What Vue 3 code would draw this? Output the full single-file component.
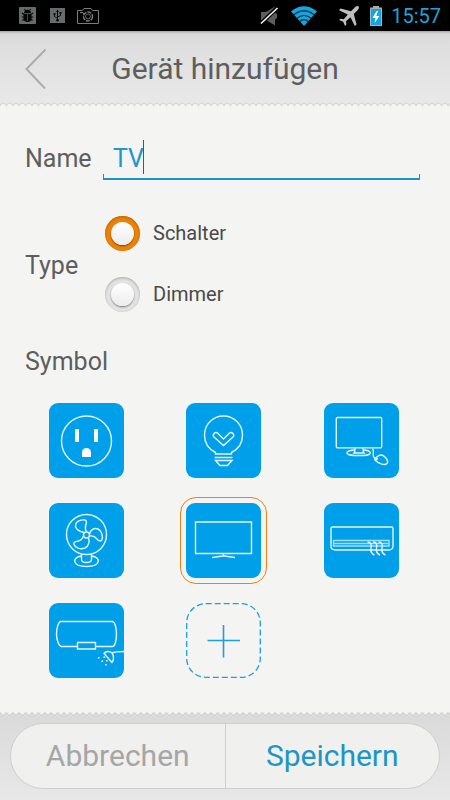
<template>
  <div class="screen">
    <div class="status">
      <svg class="s-bug" viewBox="0 0 17 17" width="17" height="17">
        <rect width="17" height="17" rx="1" fill="#666c6c" />
        <path d="M4.500 7h8v4a4 4 0 0 1-8 0zM5 6.200a3.500 3.500 0 0 1 7 0z" fill="#050505" />
        <path d="M6.500 3.500 5.500 2M10.500 3.500l1-1.500M5 7.500 3 6M12 7.500l2-1.500M5 10H2.800M12 10h2.200M5.500 12 3.500 13.500M11.500 12l2 1.500" stroke="#050505" stroke-width="1.100" />
        <path d="M8.500 7v7" stroke="#555b5b" stroke-width=".7" />
      </svg>
      <svg class="s-usb" viewBox="0 0 15 15" width="15" height="15">
        <rect width="15" height="15" fill="#666c6c" />
        <path d="M7.500 12V3M7.500 10.500 4.500 8.500V6M7.500 9l3-1.500V5" fill="none" stroke="#0a0a0a" />
        <path d="M7.500 1.500 9 4H6zM3.500 5h2v2h-2zM9.500 4h2v2h-2z" fill="#0a0a0a" />
        <circle cx="7.500" cy="12.300" r="1.300" fill="#0a0a0a" />
      </svg>
      <svg class="s-cam" viewBox="0 0 22 16" width="22" height="16" fill="none" stroke="#777c7c">
        <path d="M.5 2.500h5l1.500-2h7l1.500 2h6v13H.5z" />
        <circle cx="11" cy="8.500" r="4.500" stroke-width="1.400" stroke-dasharray="4 1" />
        <circle cx="11" cy="8.500" r="2.500" stroke-width=".8" />
        <path d="M3 4.500h3l1 2" />
      </svg>
      <div class="spacer"></div>
      <svg class="s-mute" viewBox="0 0 19 20" width="19" height="20">
        <path d="M1 6h5l9-5.500v19L6 14H1z" fill="#5d5d5d" />
        <path d="M15 6.500c3 1 3 6 0 7z" fill="#5d5d5d" />
        <path d="M0 18.500 17.500 1.500" stroke="#000" stroke-width="4" />
        <path d="M1 17.500 17.500 2" stroke="#f5f5f5" stroke-width="1.600" />
      </svg>
      <svg class="s-wifi" viewBox="0 0 26 20" width="26" height="20">
        <path d="M0 5.500C8-1.500 18-1.500 26 5.500L13 20z" fill="#16a4dc" />
        <path d="M2.500 9C9 3.500 17 3.500 23.500 9M5.500 12.500c5-4 10-4 15 0M8.500 15.500c3-2.500 6-2.500 9 0" fill="none" stroke="#052a3a" stroke-width="1.200" />
      </svg>
      <svg class="s-plane" viewBox="0 0 20 20" width="20" height="20">
        <path d="M19.500.5c-1.200-1-2.800 0-4 1.200L12 5.200 1.500 2.500 0 4.200l8.800 4.400-4 4.600-3.300-.5L0 14l4.200 1.800L6 20l1.400-1.400-.4-3.400 4.500-4 4.300 8.800 1.700-1.500L14.800 8l3.500-3.500c1.200-1.200 2.200-2.800 1.200-4z" fill="#bebebe" />
      </svg>
      <svg class="s-battery" viewBox="0 0 12 20" width="12" height="20">
        <path d="M3 0h6v1.500h3V20H0V1.500h3z" fill="#aaa" />
        <rect y="3" width="12" height="17" fill="#16a4dc" />
        <path d="M.5 3v16.500h11V3" fill="none" stroke="#8fbfd2" />
        <path d="M6.500 5 2.500 12h3L4.500 17l5-7H6.300L8 5z" fill="#fff" />
      </svg>
      <span class="clock">15:57</span>
    </div>

    <header class="header">
      <button class="back" type="button" aria-label="Zurück">
        <svg viewBox="0 0 22 40" width="22" height="40" fill="none" stroke="#acacac" stroke-width="2">
          <path d="M21.500 .500 2.500 20 21 39.500" />
        </svg>
      </button>
      <h1>Gerät hinzufügen</h1>
    </header>
    <svg class="edge" height="5">
      <defs>
        <pattern id="scallop" width="6.400" height="5" patternUnits="userSpaceOnUse">
          <rect width="6.400" height="5" fill="#e8e8e8" />
          <path d="M0 5V4C1 .2 5.400 .2 6.400 4V5z" fill="#f4f4f2" />
          <path d="M0 4.200C1 .2 5.400 .2 6.400 4.200" fill="none" stroke="#cacaca" stroke-width=".9" />
        </pattern>
      </defs>
      <rect width="100%" height="5" fill="url(#scallop)" />
    </svg>

    <main class="form">
      <div class="row name-row">
        <label class="label" for="name">Name</label>
        <div class="field">
          <input id="name" v-model="name" type="text" autocomplete="off" spellcheck="false" />
          <span class="caret"></span>
        </div>
      </div>

      <div class="row type-row" role="radiogroup" aria-labelledby="type-label">
        <span id="type-label" class="label">Type</span>
        <div class="options">
          <label v-for="t in types" :key="t" class="option">
            <input v-model="type" type="radio" name="type" :value="t" />
            <span>{{ t }}</span>
          </label>
        </div>
      </div>

      <h2 class="label">Symbol</h2>
      <div class="symbols">
        <button
          v-for="s in symbols"
          :key="s.id"
          type="button"
          class="tile"
          :class="{ selected: s.id === symbol }"
          :aria-label="s.label"
          :aria-pressed="s.id === symbol"
          @click="symbol = s.id"
        >
          <svg viewBox="0 0 75 75" width="75" height="75">
            <path v-for="(p, i) in s.soft" :key="'s' + i" :d="p" class="soft" />
            <path v-for="(p, i) in s.lines" :key="'l' + i" :d="p" class="line" />
            <path v-for="(p, i) in s.fills" :key="'f' + i" :d="p" class="fill" />
          </svg>
        </button>
        <button type="button" class="tile add" aria-label="Symbol hinzufügen">
          <svg viewBox="0 0 75 75" width="75" height="75" fill="none" stroke="#1a9fdf">
            <rect x=".7" y=".7" width="73.600" height="73.600" rx="19" stroke-width="1.300" stroke-dasharray="6 3" />
            <path d="M37.500 22v32.500M21.500 37.500h32.500" stroke-width="1.600" />
          </svg>
        </button>
      </div>
    </main>

    <svg class="edge" height="4">
      <defs>
        <pattern id="teeth" width="6.400" height="4" patternUnits="userSpaceOnUse">
          <rect width="6.400" height="4" fill="#dcdcdc" />
          <path d="M0 0V.5C1.500 .5 1.700 3 3.200 3S4.900 .5 6.400 .5V0z" fill="#f4f4f2" />
          <path d="M0 .8C1.500 .8 1.700 3.300 3.200 3.300S4.900 .8 6.400 .8" fill="none" stroke="#c6c6c6" stroke-width=".8" />
        </pattern>
      </defs>
      <rect width="100%" height="4" fill="url(#teeth)" />
    </svg>
    <footer class="footer">
      <div class="actions">
        <button type="button" class="cancel">Abbrechen</button>
        <button type="button" class="save">Speichern</button>
      </div>
    </footer>
  </div>
</template>

<script setup>
import { ref } from 'vue';

const name = ref('TV');
const type = ref('Schalter');
const symbol = ref('tv');

const types = ['Schalter', 'Dimmer'];

const symbols = [
  {
    id: 'socket',
    label: 'Steckdose',
    lines: ['M62.500 38a25 25 0 1 1-50 0a25 25 0 1 1 50 0z'],
    fills: ['M26 26h4v13h-4z', 'M45 26h4v13h-4z', 'M33 54v-4.500a4.500 4.500 0 0 1 9 0V54z'],
  },
  {
    id: 'bulb',
    label: 'Lampe',
    lines: [
      'M29.500 51v-1.500C22.500 46 18.500 40 18.500 32a19 19 0 0 1 38 0c0 8-4 14-11 17.500V51z',
      'M28.500 54.500h18M29.500 57.500h16.500L41.500 62.500h-7.500z',
      'M28 30.500c1.500-1.500 3-1 4 0l5.500 5.500 5.500-5.500c1-1 2.500-1.500 4 0 1 1.200 1 2.500 0 3.500l-9.500 8.500L28 34c-1-1-1-2.300 0-3.500z',
    ],
  },
  {
    id: 'computer',
    label: 'Computer',
    lines: [
      'M13.500 14.500h43a1.200 1.200 0 0 1 1.200 1.200v28a1.200 1.200 0 0 1-1.200 1.200h-43a1.200 1.200 0 0 1-1.200-1.200v-28a1.200 1.200 0 0 1 1.200-1.200z',
      'M31 45c0 4-1 5-1 5h10s-1-1-1-5',
      'M31 47c-10 .5-11 5-1 5.500h10c9-.5 8-5-1-5.500',
      'M48.500 45.500c2 2 0 6 1 8s2 2 2.500 3.500',
      'M51 57c0-3 5-6 8-4.500s6 6 4 8-8 1-12-3.500zM51 57l3-1.500',
    ],
  },
  {
    id: 'fan',
    label: 'Ventilator',
    lines: [
      'M57.500 31.500a20 20 0 1 1-40 0a20 20 0 1 1 40 0z',
      'M40.500 32a3 3 0 1 1-6 0a3 3 0 1 1 6 0z',
      'M35 29.500c-4-1-8.500-3-8.500-6.500 0-5 6-6.500 9.500-6 2 .5 1.500 3 .8 5-.8 3-.6 5 .7 7',
      'M40.500 31c1-4 4.500-6.500 8.500-5 4 2 5 7.500 4 10.500-1 2.500-3.500 1.500-5-.5-2-2.500-4.500-3.500-7.500-3',
      'M39.500 34.500c1.500 4 0 9-3.500 10.500-5 2-10-.5-11-3.500-1-2.500 1.500-3 3.500-3.300 3-.5 5-2.200 6-5.200',
      'M32.500 51v5.500c0 4 10 4 10 0V51',
      'M32.500 53c-9.500 1-10 10.500 5 10.500s14.500-9.500 5-10.500',
    ],
  },
  {
    id: 'tv',
    label: 'Fernseher',
    lines: ['M9.500 19h56v31.500h-56z', 'M37.500 50.500v2.500M26 54.500l11-1.500h1.500l10.500 1.500'],
  },
  {
    id: 'aircon',
    label: 'Klimaanlage',
    lines: [
      'M8.500 24h59a1.500 1.500 0 0 1 1.500 1.500v18c0 2-2 3.500-4 3.500H11.500c-3 0-4.500-1.500-4.500-3.500v-18A1.500 1.500 0 0 1 8.500 24z',
      'M43.500 39c4 0 4 3 3.500 6s1 6 3.500 7M49 39c4 0 4 3 3.500 6s1 6 3.500 7M54.500 39c4 0 4 3 3.500 6s1 6 3.500 7',
    ],
    soft: ['M9.500 37.500h55.500v5.500h-55.500z', 'M10 40.500h54.500'],
  },
  {
    id: 'boiler',
    label: 'Boiler',
    lines: [
      'M28.500 43.500H12.500C10 43.500 7.500 37 7.500 31s2-12 4-12.500h52c2.500.5 4 6.500 4 12.500s-1.500 12.500-4 12.500H46.500',
      'M28.500 39.500h18v6.500h-18z',
      'M75 48.500c-5 0-9 0-12 1.500-2-2-6-2-8 .5l8 9c2-2 2-7 0-9.500',
    ],
    fills: [
      'M49 54h1.600v1.600H49zM52.500 57.500h1.600v1.600h-1.600zM56 61h1.600v1.600H56zM54.500 53.500h1.600v1.600h-1.600zM57 57h1.600v1.600H57z',
    ],
  },
];
</script>

<style>
body { background: #f4f4f2; }
</style>

<style scoped>
.screen {
  display: flex;
  flex-direction: column;
  min-height: 100vh;
  background: #f4f4f2;
  color: #5e5e5e;
  font-family: Roboto, "Liberation Sans", sans-serif;
}
button { padding: 0; border: 0; background: none; font: inherit; cursor: pointer; }
svg { display: block; }

.status { display: flex; align-items: center; height: 31px; padding: 0 9px 0 19px; background: #000; }
.spacer { flex: 1; }
.s-bug { margin-right: 14px; }
.s-usb { margin-right: 12px; }
.s-mute { margin-right: 12px; }
.s-wifi { margin-right: 22px; }
.s-plane { margin-right: 11px; }
.s-battery { margin-right: 9px; }
.clock { color: #1fa3d8; font-size: 20px; line-height: 30px; }

.header {
  display: grid;
  grid-template-columns: 1fr auto 1fr;
  align-items: center;
  height: 71px;
  padding: 0 24px;
  background: linear-gradient(#a8a8a8, #d9d9d9 3px, #dedede 12px, #e8e8e8);
}
.header h1 { margin: 0; padding-top: 4px; font-size: 30px; font-weight: 400; line-height: 36px; }
.back { justify-self: start; padding-top: 4px; }
.edge { width: 100%; flex: none; }

.form { flex: 1; padding: 27px 20px 34px 18px; }
.row { display: flex; align-items: center; padding: 0 10px 0 7px; }
.label { font-size: 25px; font-weight: 400; line-height: 32px; }
.row .label { width: 78px; padding-top: 4px; flex: none; }
.name-row { height: 46px; }
.field { position: relative; flex: 1; }
.field::after {
  content: "";
  position: absolute;
  inset: auto 0 0;
  height: 4px;
  border: solid #1c94c8;
  border-width: 0 1px 2px;
}
.field input {
  display: block;
  box-sizing: border-box;
  width: 100%;
  height: 46px;
  padding: 2px 10px 0;
  border: 0;
  outline: 0;
  background: none;
  color: #2196c8;
  caret-color: transparent;
  font: 25px Roboto, "Liberation Sans", sans-serif;
}
.caret { position: absolute; top: 6px; left: 40px; width: 1px; height: 34px; background: #555; }

.type-row { margin-top: 35px; }
.options { display: flex; flex-direction: column; gap: 25px; padding-left: 2px; }
.option { display: flex; align-items: center; gap: 13px; color: #4a4a4a; font-size: 20px; line-height: 36px; cursor: pointer; }
.option input {
  appearance: none;
  box-sizing: border-box;
  width: 35px;
  height: 35px;
  margin: 0;
  padding: 6px;
  border-radius: 50%;
  background: #e4e4e4;
  box-shadow: inset 0 1px 3px #a8a8a8;
}
.option input::before {
  content: "";
  display: block;
  height: 23px;
  border-radius: 50%;
  background: linear-gradient(#fff, #ececec);
  box-shadow: 0 1px 2px #777;
}
.option input:checked { background: #f08308; box-shadow: inset 0 1px 3px #b06000; }
.option input:checked::before { box-shadow: 0 1px 2px #7a4000; }

h2.label { margin: 34px 7px 25px; }
.symbols { display: grid; grid-template-columns: repeat(3, 1fr); gap: 25px 0; justify-items: center; }
.tile { position: relative; width: 75px; height: 75px; border-radius: 9px; background: #009fe9; }
.tile.selected::after {
  content: "";
  position: absolute;
  inset: -6px;
  border: 1px solid #f08010;
  border-radius: 16px;
}
.tile.add { background: none; }
.line, .soft { fill: none; stroke: #e6f5fd; stroke-width: 1.4px; }
.soft { stroke: #a9dcf6; }
.fill { fill: #fff; }

.footer { padding: 7px 10px 12px; background: linear-gradient(#dadada, #e8e8e8); }
.actions {
  display: flex;
  box-sizing: border-box;
  height: 66px;
  border: 1px solid #cfcfcf;
  border-radius: 33px;
  background: #f0f0ee;
}
.actions button { flex: 1; font-size: 30px; line-height: 36px; }
.cancel { color: #a6a6a6; }
.actions .save { border-left: 1px solid #cfcfcf; color: #1c96c6; }
</style>
